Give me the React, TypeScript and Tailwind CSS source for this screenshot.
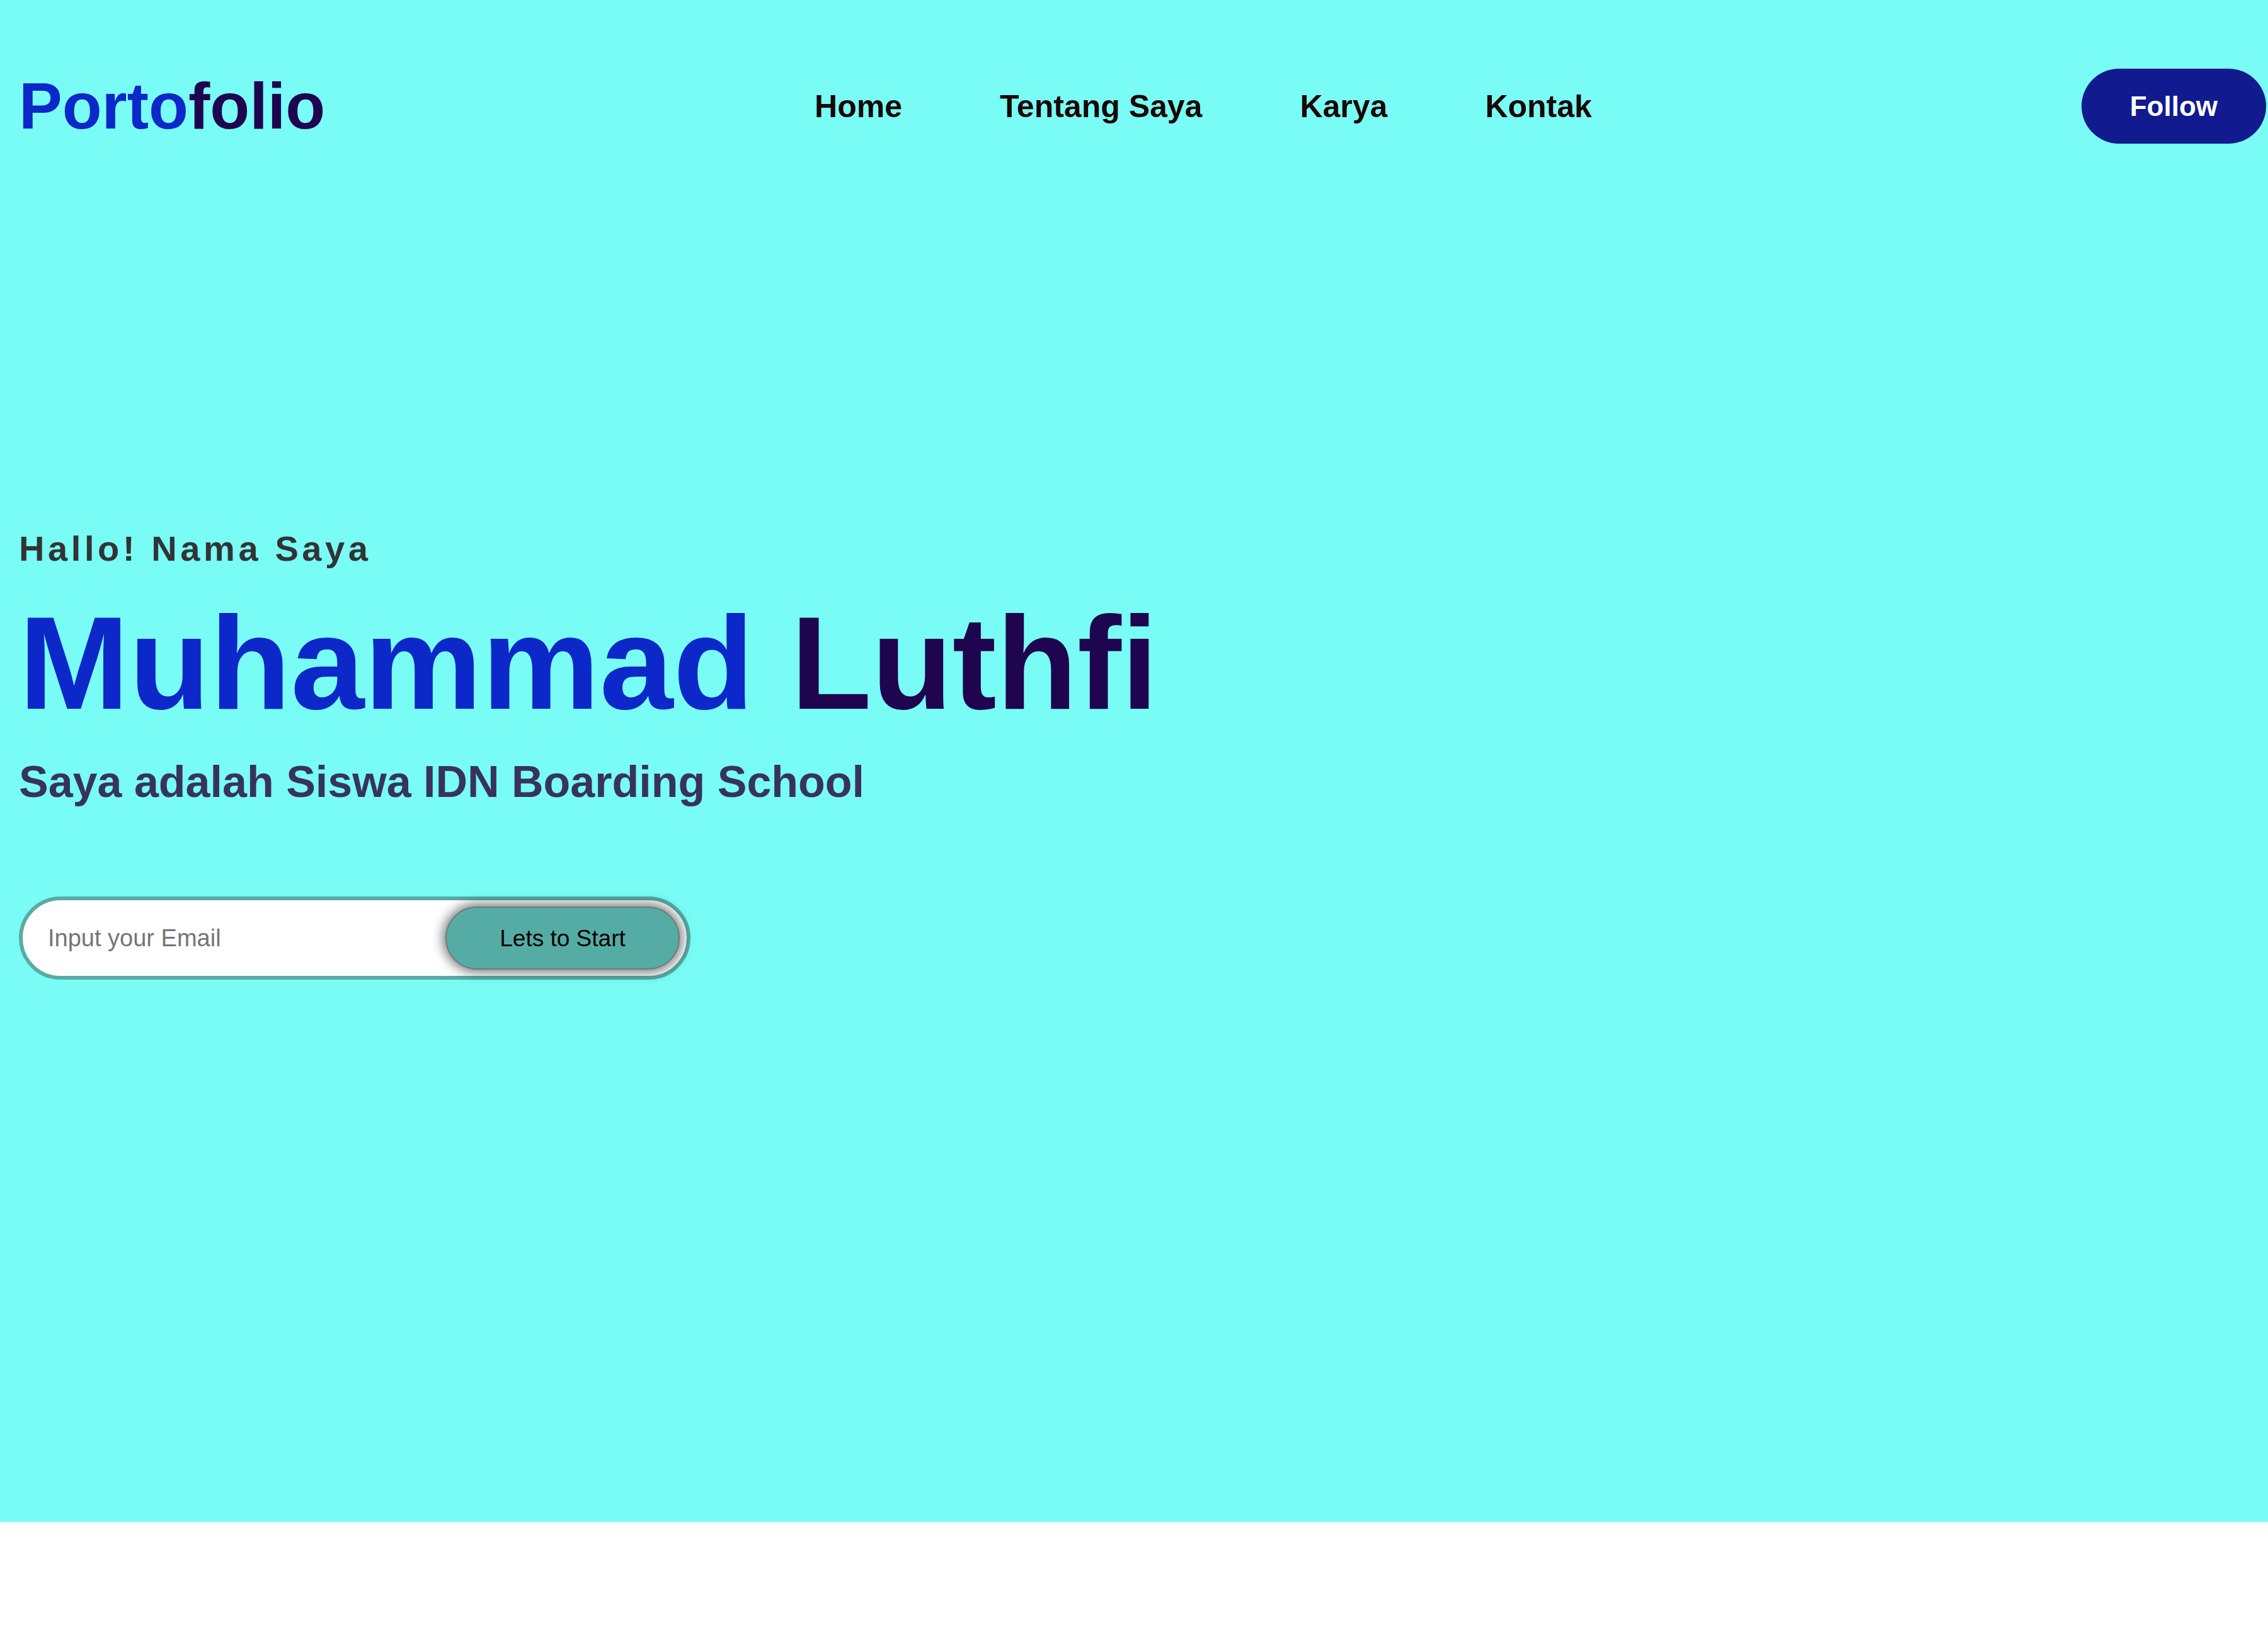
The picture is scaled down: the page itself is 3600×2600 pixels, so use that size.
import React from "react";

const navLinks = ["Home", "Tentang Saya", "Karya", "Kontak"];

function Header() {
  return (
    <header className="flex items-center justify-between pl-[30px] pr-[3px] pt-[109px]">
      <a href="#" className="text-[103px] font-bold leading-none">
        <span className="text-[#0c28c8]">Porto</span>
        <span className="text-[#1f0550]">folio</span>
      </a>
      <nav className="flex items-center gap-[155px]">
        {navLinks.map((link) => (
          <a key={link} href="#" className="text-[50px] font-bold leading-none text-[#1a0707]">
            {link}
          </a>
        ))}
      </nav>
      <button className="rounded-full bg-[#111a8f] px-[77px] py-[37.5px] text-[44px] font-bold leading-none text-white">
        Follow
      </button>
    </header>
  );
}

function Hero() {
  return (
    <div className="flex flex-col items-start pl-[30px] pt-[615px]">
      <p className="text-[56px] font-bold leading-none tracking-[0.1em] text-[#333336]">Hallo! Nama Saya</p>
      <h1 className="mt-[49px] text-[210px] font-bold leading-none">
        <span className="text-[#0c28c8]">Muhammad</span>{" "}
        <span className="text-[#1f0550]">Luthfi</span>
      </h1>
      <p className="mt-[48px] text-[70px] font-bold leading-none text-[#38335b]">
        Saya adalah Siswa IDN Boarding School
      </p>
      <form
        className="mt-[147px] flex h-[132px] w-[1066px] items-center rounded-full border-[6px] border-[#58aba5] bg-white pl-[40px] pr-[11px]"
        onSubmit={(e) => e.preventDefault()}
      >
        <input
          type="email"
          placeholder="Input your Email"
          className="min-w-0 flex-1 bg-transparent text-[38px] text-black outline-none placeholder:text-[#757575]"
        />
        <button
          type="submit"
          className="h-[100px] w-[372px] shrink-0 rounded-full border-2 border-[#6b7d7b] bg-[#55aca5] text-[37px] leading-none text-black shadow-[0_0_18px_4px_rgba(0,0,0,0.55)]"
        >
          Lets to Start
        </button>
      </form>
    </div>
  );
}

export default function App() {
  return (
    <div className="min-h-screen bg-white font-['Liberation_Sans',Arial,sans-serif]">
      <section className="h-[2416px] bg-[#78fcf5]">
        <Header />
        <Hero />
      </section>
    </div>
  );
}
